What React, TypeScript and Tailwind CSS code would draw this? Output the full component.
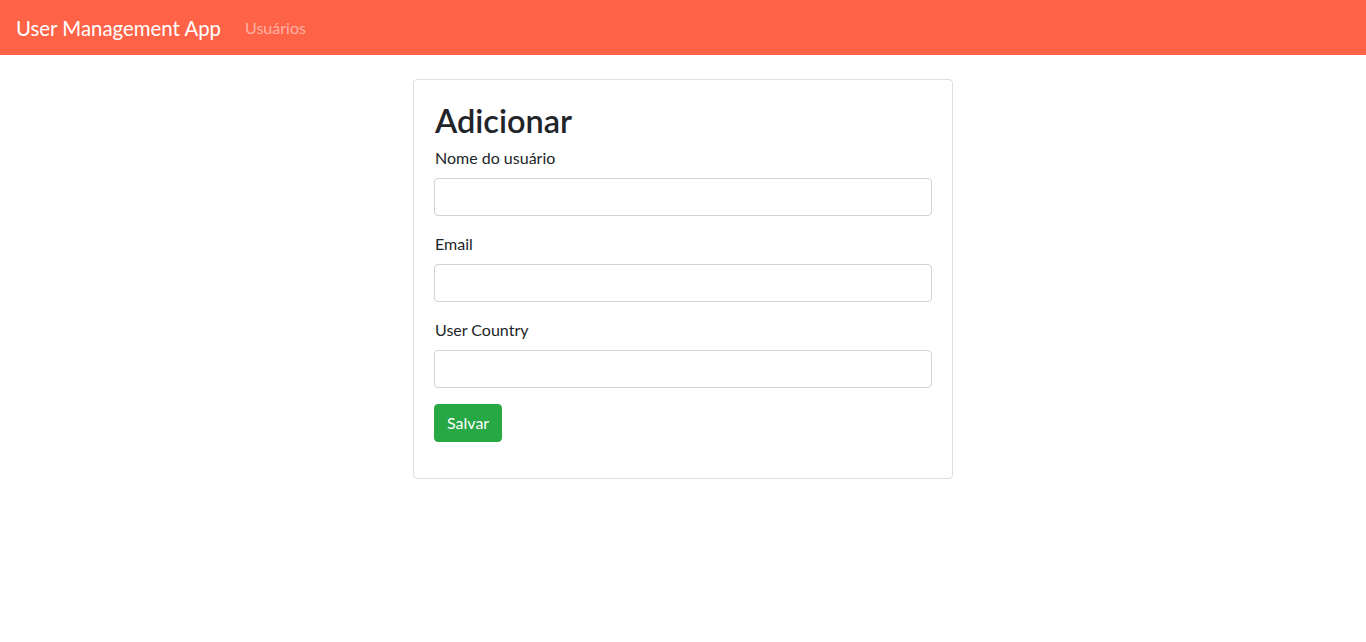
export default function App() {
  return (
    <div className="min-h-screen bg-white text-[#212529] font-['Lato',sans-serif] text-base">
      <nav className="h-[55px] bg-[#ff6347] flex items-center px-4">
        <span className="text-white text-[20.4px] leading-[30px] mr-4">User Management App</span>
        <a className="text-white/50 px-2 leading-6">Usuários</a>
      </nav>
      <div className="flex justify-center mt-6">
        <div className="w-[540px] border border-black/[0.125] rounded p-5">
          <h2 className="text-[32.5px] font-semibold leading-[38px] mt-[2px] mb-[6px] pl-px">Adicionar</h2>
          <form className="mb-4">
            <div className="mb-4">
              <label className="block mb-2 leading-6 pl-px">Nome do usuário</label>
              <input className="block w-full h-[38px] border border-[#ced4da] rounded px-3" />
            </div>
            <div className="mb-4">
              <label className="block mb-2 leading-6 pl-px">Email</label>
              <input className="block w-full h-[38px] border border-[#ced4da] rounded px-3" />
            </div>
            <div className="mb-4">
              <label className="block mb-2 leading-6 pl-px">User Country</label>
              <input className="block w-full h-[38px] border border-[#ced4da] rounded px-3" />
            </div>
            <button type="button" className="bg-[#28a745] text-white rounded h-[38px] px-3 leading-6 border border-[#28a745]">
              Salvar
            </button>
          </form>
        </div>
      </div>
    </div>
  );
}
